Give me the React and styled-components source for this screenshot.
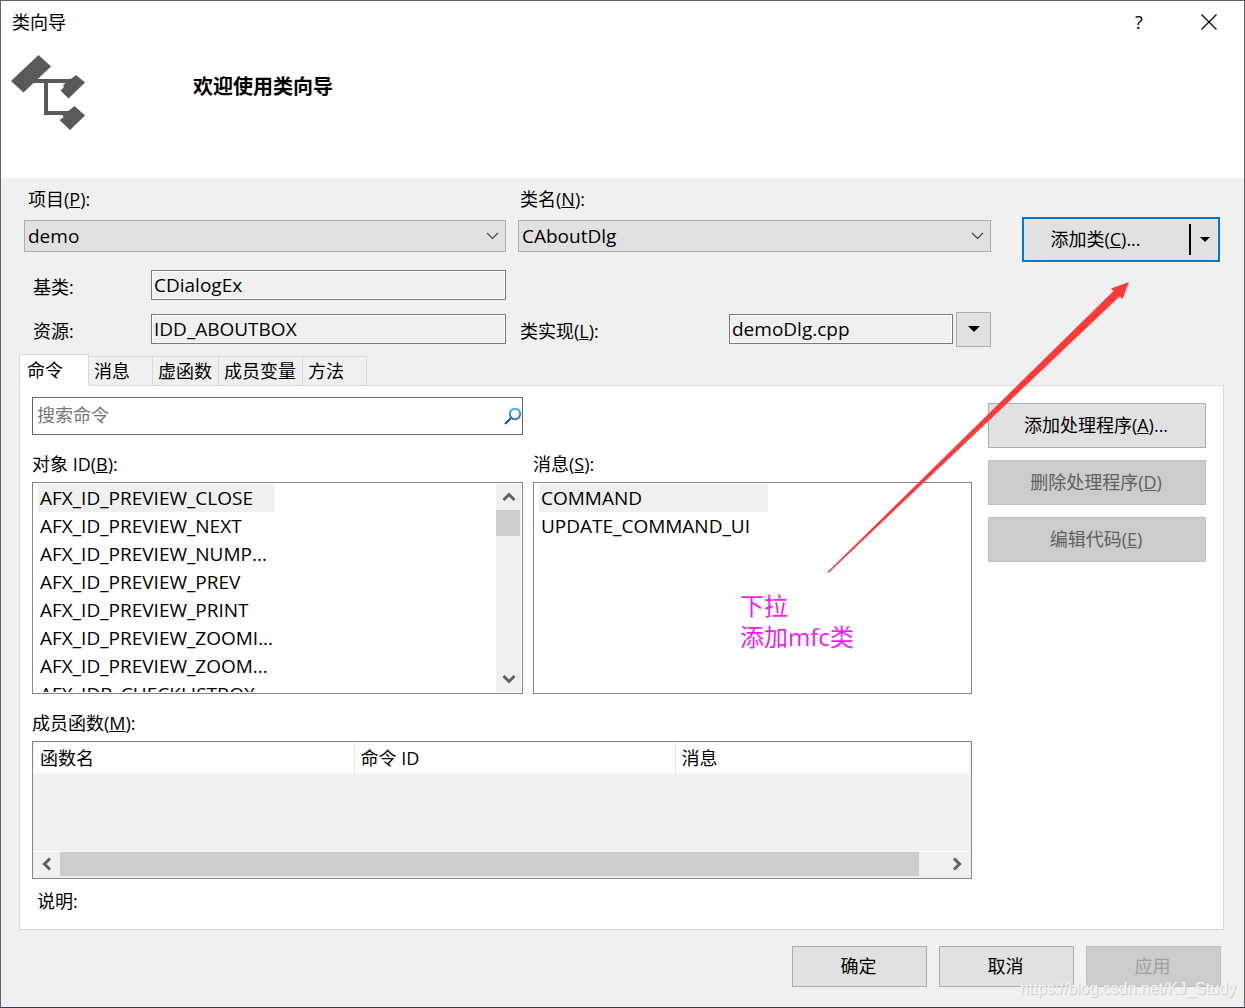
import React, { useState } from 'react';
import styled, { createGlobalStyle } from 'styled-components';

const GlobalStyle = createGlobalStyle`
    * {
        box-sizing: border-box;
    }
    body {
        margin: 0;
        background-color: #f0f0f0;
    }
    body, button, input, select {
        font-family: "Open Sans", "Noto Sans CJK SC", sans-serif;
        font-size: 18px;
        line-height: 24px;
        color: #000;
    }
`;

const Dialog = styled.div`
    position: relative;
    display: flex;
    flex-direction: column;
    min-height: 100vh;
    border: 1px solid #646464;
    border-bottom-color: #1b4460;
    background-color: #f0f0f0;
`;

const TitleBar = styled.header`
    display: flex;
    align-items: center;
    height: 42px;
    padding-left: 11px;
    background-color: #fff;
`;

const Title = styled.span`
    flex: 1;
`;

const TitleButton = styled.button`
    display: flex;
    align-items: center;
    justify-content: center;
    width: 70px;
    height: 42px;
    padding: 0;
    border: none;
    background: none;
`;

const Banner = styled.div`
    display: flex;
    gap: 108px;
    height: 135px;
    padding: 12px 10px;
    background-color: #fff;
`;

const Heading = styled.h1`
    margin: 20px 0 0;
    font-family: "Liberation Serif", "Noto Sans CJK SC", serif;
    font-size: 20px;
    line-height: 24px;
    font-weight: 700;
`;

const Form = styled.section`
    display: flex;
    align-items: flex-start;
    gap: 31px;
    padding: 0 24px 7px 23px;
`;

const Fields = styled.div`
    flex: 1;
    display: grid;
    grid-template-columns: 482fr 473fr;
    column-gap: 12px;
    padding-top: 9px;
`;

const Field = styled.div`
    display: flex;
    flex-direction: column;
    gap: 9px;
    margin-bottom: 18px;
`;

const Label = styled.label`
    padding-left: ${(props) => props.$indent || 0}px;
`;

const SelectWrapper = styled.div`
    position: relative;
    svg {
        position: absolute;
        top: 12px;
        right: 7px;
        pointer-events: none;
    }
`;

const Select = styled.select`
    appearance: none;
    display: block;
    width: 100%;
    height: 32px;
    padding: 0 28px 0 3px;
    border: 1px solid #adadad;
    border-radius: 0;
    background-color: #e1e1e1;
    font-size: 19px;
`;

const FieldRow = styled.div`
    display: flex;
    align-items: center;
    height: ${(props) => props.$height}px;
    margin-top: ${(props) => props.$gap || 0}px;
    ${Label} {
        flex: 1;
        padding-top: 3px;
    }
`;

const ReadOnly = styled.input`
    width: ${(props) => props.$width};
    height: 30px;
    padding: 0 2px;
    border: 1px solid #7a7a7a;
    box-shadow: inset 0 0 0 1px #fff;
    background-color: #f0f0f0;
    font-size: 19px;
`;

const Button = styled.button`
    height: ${(props) => props.$height || 45}px;
    width: ${(props) => props.$width || "100%"};
    padding: 0 2px 2px 0;
    border: 1px solid #adadad;
    background-color: #e1e1e1;
    &:disabled {
        border-color: #bfbfbf;
        background-color: #ccc;
        color: ${(props) => (props.$faint ? "#a0a0a0" : "#606060")};
    }
`;

const DropButton = styled.button`
    display: flex;
    align-items: center;
    justify-content: center;
    width: 35px;
    height: 35px;
    margin-left: 3px;
    padding: 0;
    border: 1px solid #adadad;
    background-color: #e1e1e1;
`;

const SplitButton = styled.div`
    display: flex;
    align-items: center;
    width: 198px;
    height: 45px;
    margin-top: 39px;
    border: 2px solid #0078d7;
    background-color: #e1e1e1;
`;

const SplitMain = styled.button`
    flex: 1;
    height: 41px;
    padding: 0 22px 2px 0;
    border: none;
    background: none;
`;

const SplitArrow = styled.button`
    display: flex;
    align-items: center;
    justify-content: center;
    width: 29px;
    height: 31px;
    padding: 0;
    border: none;
    border-left: 2px solid #000;
    background: none;
`;

const Tabs = styled.div`
    display: flex;
    align-items: flex-end;
    height: 32px;
    margin: 0 18px -1px;
    position: relative;
`;

const Tab = styled.button`
    width: ${(props) => props.$width}px;
    height: ${(props) => (props.$active ? 32 : 30)}px;
    padding: 0 0 0 ${(props) => (props.$active ? 7 : 5)}px;
    border: 1px solid #d9d9d9;
    border-left-width: ${(props) => (props.$active ? 1 : 0)}px;
    border-bottom-color: ${(props) => (props.$active ? "#fff" : "#d9d9d9")};
    background-color: ${(props) => (props.$active ? "#fff" : "#f0f0f0")};
    text-align: left;
`;

const Panel = styled.main`
    flex: 1;
    display: flex;
    gap: 16px;
    margin: 0 20px 0 18px;
    padding: 11px 17px 15px 12px;
    border: 1px solid #d9d9d9;
    background-color: #fff;
`;

const Content = styled.div`
    flex: 1;
    min-width: 0;
`;

const Side = styled.div`
    display: flex;
    flex-direction: column;
    gap: 12px;
    width: 218px;
    padding-top: 6px;
`;

const Columns = styled.div`
    display: grid;
    grid-template-columns: 491fr 439fr;
    column-gap: 10px;
    margin-bottom: 17px;
`;

const Search = styled.div`
    display: flex;
    align-items: center;
    height: 38px;
    border: 1px solid #646464;
    background-color: #fff;
`;

const SearchInput = styled.input`
    flex: 1;
    min-width: 0;
    padding: 0 4px 2px;
    border: none;
    outline: none;
    background: none;
    &::placeholder {
        color: #767676;
        opacity: 1;
    }
`;

const SearchButton = styled.button`
    display: flex;
    padding: 0;
    border: none;
    background: none;
`;

const Caption = styled.div`
    margin-bottom: 6px;
`;

const ListBox = styled.div`
    display: flex;
    height: 212px;
    padding: 1px;
    border: 1px solid #828790;
    background-color: #fff;
    overflow: hidden;
`;

const List = styled.ul`
    flex: 1;
    height: 208px;
    margin: 0;
    padding: 0 0 0 4px;
    list-style: none;
    overflow: hidden;
`;

const Item = styled.li`
    width: ${(props) => props.$width}px;
    height: 28px;
    padding-left: 2px;
    font-size: 19px;
    line-height: 28px;
    white-space: nowrap;
    background-color: ${(props) => (props.$active ? "#f0f0f0" : "transparent")};
`;

const VScroll = styled.div`
    display: flex;
    flex-direction: column;
    width: 25px;
    background-color: #f0f0f0;
`;

const HScroll = styled.div`
    display: flex;
    border-top: 1px solid #fff;
    background-color: #f0f0f0;
`;

const ScrollButton = styled.button`
    display: flex;
    align-items: center;
    justify-content: center;
    flex: none;
    width: 25px;
    height: ${(props) => (props.$flat ? 24 : 26)}px;
    padding: 0;
    border: none;
    background: none;
`;

const VTrack = styled.div`
    flex: 1;
`;

const VThumb = styled.div`
    width: 24px;
    height: 26px;
    background-color: #cdcdcd;
`;

const HTrack = styled.div`
    flex: 1;
    padding: 0 25px 0 1px;
`;

const HThumb = styled.div`
    height: 24px;
    background-color: #cdcdcd;
`;

const TableBox = styled.div`
    display: flex;
    flex-direction: column;
    justify-content: space-between;
    height: 138px;
    margin-bottom: 10px;
    padding: 1px 2px 2px 1px;
    border: 1px solid #828790;
    background-color: #f0f0f0;
`;

const Table = styled.table`
    width: 100%;
    border-collapse: collapse;
    table-layout: fixed;
    background-color: #fff;
`;

const Th = styled.th`
    width: ${(props) => props.$width || "auto"};
    height: 30px;
    padding: 0 0 0 6px;
    border-right: 1px solid #e5e5e5;
    font-weight: 400;
    text-align: left;
    &:last-child {
        border-right: none;
    }
`;

const Note = styled.div`
    padding-left: 5px;
`;

const Footer = styled.footer`
    display: flex;
    justify-content: flex-end;
    gap: 12px;
    padding: 16px 23px 20px;
`;

const Arrow = styled.svg`
    position: absolute;
    top: 280px;
    left: 826px;
    pointer-events: none;
`;

const Annotation = styled.div`
    position: absolute;
    top: 589px;
    left: 739px;
    font-size: 24px;
    line-height: 31px;
    color: #f51af5;
`;

const Watermark = styled.div`
    position: absolute;
    right: 8px;
    bottom: 6px;
    font-family: "Liberation Sans", sans-serif;
    font-size: 16px;
    color: #f4f4f4;
    text-shadow: 1px 1px 1px #c4c4c4;
    pointer-events: none;
`;

const Chevron = () => (
    <svg width="13" height="8" viewBox="0 0 13 8" fill="none">
        <path d="M1 1l5.500 5.500L12 1" stroke="#444" strokeWidth="1.200" />
    </svg>
);

const Caret = ({ size }) => (
    <svg width={size} height={size / 2} viewBox="0 0 12 6">
        <path d="M0 0h12L6 6z" />
    </svg>
);

const angles = { up: 0, right: 90, down: 180, left: 270 };

const ScrollArrow = ({ dir }) => (
    <svg width="14" height="14" viewBox="0 0 14 14" fill="none">
        <path
            d="M1.500 10L7 4.500l5.500 5.500"
            stroke="#606060"
            strokeWidth="3"
            transform={`rotate(${angles[dir]} 7 7)`}
        />
    </svg>
);

const objectIds = [
    "AFX_ID_PREVIEW_CLOSE",
    "AFX_ID_PREVIEW_NEXT",
    "AFX_ID_PREVIEW_NUMP...",
    "AFX_ID_PREVIEW_PREV",
    "AFX_ID_PREVIEW_PRINT",
    "AFX_ID_PREVIEW_ZOOMI...",
    "AFX_ID_PREVIEW_ZOOM...",
    "AFX_IDB_CHECKLISTBOX",
];

const messages = ["COMMAND", "UPDATE_COMMAND_UI"];

const tabs = [
    { name: "命令", width: 70 },
    { name: "消息", width: 64 },
    { name: "虚函数", width: 66 },
    { name: "成员变量", width: 84 },
    { name: "方法", width: 64 },
];

const App = () => {
    const [tab, setTab] = useState("命令");
    const [objectId, setObjectId] = useState(objectIds[0]);
    const [message, setMessage] = useState(messages[0]);

    return (
        <Dialog>
            <GlobalStyle />
            <TitleBar>
                <Title>类向导</Title>
                <TitleButton aria-label="帮助">?</TitleButton>
                <TitleButton aria-label="关闭">
                    <svg width="16" height="16" viewBox="0 0 16 16" stroke="#000" strokeWidth="1.200">
                        <path d="M0.500 0.500l15 15M15.500 0.500l-15 15" />
                    </svg>
                </TitleButton>
            </TitleBar>
            <Banner>
                <svg width="74" height="76" viewBox="0 0 74 76" fill="#58595b">
                    <path d="M27.500 0L40 11.500 12.500 37.500 0 26z" />
                    <path d="M22 24h42v4H37v28h22v4H33V28H18z" />
                    <path d="M65 20l9 7.500L57.500 43.500 49.500 35.500l3.500-3.500-1-1.500 3-3z" />
                    <path d="M63.500 51l10.500 9.500L59 75 48.500 65l4-2.500-1-3 4-2z" />
                </svg>
                <Heading>欢迎使用类向导</Heading>
            </Banner>

            <Form>
                <Fields>
                    <Field>
                        <Label htmlFor="project" $indent={4}>项目(<u>P</u>):</Label>
                        <SelectWrapper>
                            <Select id="project">
                                <option>demo</option>
                            </Select>
                            <Chevron />
                        </SelectWrapper>
                    </Field>
                    <Field>
                        <Label htmlFor="className" $indent={2}>类名(<u>N</u>):</Label>
                        <SelectWrapper>
                            <Select id="className">
                                <option>CAboutDlg</option>
                            </Select>
                            <Chevron />
                        </SelectWrapper>
                    </Field>
                    <FieldRow $height={30}>
                        <Label htmlFor="base" $indent={9}>基类:</Label>
                        <ReadOnly id="base" $width="355px" readOnly value="CDialogEx" />
                    </FieldRow>
                    <span />
                    <FieldRow $height={36} $gap={11}>
                        <Label htmlFor="resource" $indent={9}>资源:</Label>
                        <ReadOnly id="resource" $width="355px" readOnly value="IDD_ABOUTBOX" />
                    </FieldRow>
                    <FieldRow $height={36} $gap={11}>
                        <Label htmlFor="impl" $indent={2}>类实现(<u>L</u>):</Label>
                        <ReadOnly id="impl" $width="224px" readOnly value="demoDlg.cpp" />
                        <DropButton aria-label="类实现">
                            <Caret size={12} />
                        </DropButton>
                    </FieldRow>
                </Fields>
                <SplitButton>
                    <SplitMain>添加类(<u>C</u>)...</SplitMain>
                    <SplitArrow aria-label="添加类">
                        <Caret size={10} />
                    </SplitArrow>
                </SplitButton>
            </Form>

            <Tabs role="tablist">
                {tabs.map((t) => (
                    <Tab
                        key={t.name}
                        role="tab"
                        aria-selected={tab === t.name}
                        $width={t.width}
                        $active={tab === t.name}
                        onClick={() => setTab(t.name)}
                    >
                        {t.name}
                    </Tab>
                ))}
            </Tabs>
            <Panel>
                <Content>
                    <Columns>
                        <Search>
                            <SearchInput placeholder="搜索命令" aria-label="搜索命令" />
                            <SearchButton aria-label="搜索">
                                <svg width="18" height="18" viewBox="0 0 18 18" fill="none">
                                    <defs>
                                        <linearGradient id="lens" x1="0" y1="0" x2="0" y2="1">
                                            <stop offset="0" stopColor="#3db4e6" />
                                            <stop offset="1" stopColor="#3a6fc0" />
                                        </linearGradient>
                                    </defs>
                                    <path d="M7 11L1 17" stroke="#2b4c9b" strokeWidth="2.200" />
                                    <circle cx="11" cy="7" r="5.200" stroke="url(#lens)" strokeWidth="2" />
                                </svg>
                            </SearchButton>
                        </Search>
                    </Columns>
                    <Columns>
                        <div>
                            <Caption id="objects">对象 ID(<u>B</u>):</Caption>
                            <ListBox>
                                <List role="listbox" aria-labelledby="objects">
                                    {objectIds.map((id) => (
                                        <Item
                                            key={id}
                                            role="option"
                                            aria-selected={objectId === id}
                                            $width={236}
                                            $active={objectId === id}
                                            onClick={() => setObjectId(id)}
                                        >
                                            {id}
                                        </Item>
                                    ))}
                                </List>
                                <VScroll>
                                    <ScrollButton aria-label="向上"><ScrollArrow dir="up" /></ScrollButton>
                                    <VTrack><VThumb /></VTrack>
                                    <ScrollButton aria-label="向下"><ScrollArrow dir="down" /></ScrollButton>
                                </VScroll>
                            </ListBox>
                        </div>
                        <div>
                            <Caption id="messages">消息(<u>S</u>):</Caption>
                            <ListBox>
                                <List role="listbox" aria-labelledby="messages">
                                    {messages.map((m) => (
                                        <Item
                                            key={m}
                                            role="option"
                                            aria-selected={message === m}
                                            $width={229}
                                            $active={message === m}
                                            onClick={() => setMessage(m)}
                                        >
                                            {m}
                                        </Item>
                                    ))}
                                </List>
                            </ListBox>
                        </div>
                    </Columns>
                    <Caption id="members">成员函数(<u>M</u>):</Caption>
                    <TableBox>
                        <Table aria-labelledby="members">
                            <thead>
                                <tr>
                                    <Th $width="320px">函数名</Th>
                                    <Th $width="321px">命令 ID</Th>
                                    <Th>消息</Th>
                                </tr>
                            </thead>
                        </Table>
                        <HScroll>
                            <ScrollButton $flat aria-label="向左"><ScrollArrow dir="left" /></ScrollButton>
                            <HTrack><HThumb /></HTrack>
                            <ScrollButton $flat aria-label="向右"><ScrollArrow dir="right" /></ScrollButton>
                        </HScroll>
                    </TableBox>
                    <Note>说明:</Note>
                </Content>
                <Side>
                    <Button>添加处理程序(<u>A</u>)...</Button>
                    <Button disabled>删除处理程序(<u>D</u>)</Button>
                    <Button disabled>编辑代码(<u>E</u>)</Button>
                </Side>
            </Panel>

            <Footer>
                <Button $width="135px" $height={41}>确定</Button>
                <Button $width="135px" $height={41}>取消</Button>
                <Button $width="135px" $height={41} $faint disabled>应用</Button>
            </Footer>

            <Arrow width="304" height="294" viewBox="827 281 304 294" fill="#fd3a39">
                <path d="M827.500 572L1113.500 291 1111 288.500 1129 282 1122.500 299 1119.500 296.500 828.500 573z" />
            </Arrow>
            <Annotation>
                <div>下拉</div>
                <div>添加mfc类</div>
            </Annotation>
            <Watermark>https://blog.csdn.net/KJ_Study</Watermark>
        </Dialog>
    );
};

export default App;
